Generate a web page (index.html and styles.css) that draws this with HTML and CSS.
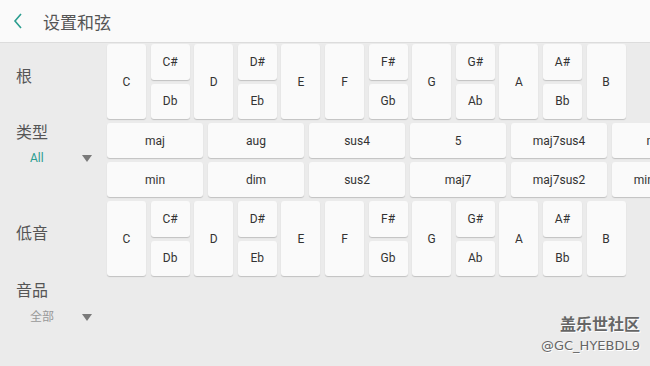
FILE: index.html
```html
<!DOCTYPE html>
<html lang="zh-CN">
<head>
    <meta charset="UTF-8">
    <meta name="viewport" content="width=device-width, initial-scale=1.0">
    <title>设置和弦</title>
    <link rel="stylesheet" href="styles.css">
</head>
<body>
    <div class="header">
        <svg class="back" width="10" height="16" viewBox="0 0 10 16">
            <polyline points="8,1 2,8 8,15" fill="none" stroke="#2a9d8f" stroke-width="1.6"/>
        </svg>
        <span class="title">设置和弦</span>
    </div>

    <div class="main">
        <div class="label root-label"><span class="name">根</span></div>
        <div class="keys" id="rootKeys"></div>

        <div class="label type-label">
            <span class="name">类型</span>
            <div class="select"><span class="value green">All</span><span class="arrow"></span></div>
        </div>
        <div class="types">
            <div class="type-row">
                <div class="btn">maj</div><div class="btn">aug</div><div class="btn">sus4</div>
                <div class="btn">5</div><div class="btn">maj7sus4</div><div class="btn">min7</div>
            </div>
            <div class="type-row">
                <div class="btn">min</div><div class="btn">dim</div><div class="btn">sus2</div>
                <div class="btn">maj7</div><div class="btn">maj7sus2</div><div class="btn">min7sus4</div>
            </div>
        </div>

        <div class="label bass-label"><span class="name">低音</span></div>
        <div class="keys" id="bassKeys"></div>

        <div class="label fret-label">
            <span class="name">音品</span>
            <div class="select"><span class="value">全部</span><span class="arrow"></span></div>
        </div>
    </div>

    <div class="watermark">
        <div class="wm-big">盖乐世社区</div>
        <div class="wm-small">@GC_HYEBDL9</div>
    </div>

    <script>
        // 十二个音
        const notes = ['C', ['C#', 'Db'], 'D', ['D#', 'Eb'], 'E', 'F', ['F#', 'Gb'], 'G', ['G#', 'Ab'], 'A', ['A#', 'Bb'], 'B'];

        function buildKeys(id) {
            const box = document.getElementById(id);
            notes.forEach(n => {
                if (Array.isArray(n)) {
                    const col = document.createElement('div');
                    col.className = 'key-col';
                    n.forEach(t => {
                        const k = document.createElement('div');
                        k.className = 'key half';
                        k.textContent = t;
                        col.appendChild(k);
                    });
                    box.appendChild(col);
                } else {
                    const k = document.createElement('div');
                    k.className = 'key';
                    k.textContent = n;
                    box.appendChild(k);
                }
            });
        }

        buildKeys('rootKeys');
        buildKeys('bassKeys');
    </script>
</body>
</html>
```
FILE: styles.css
```css
body {
    margin: 0;
    padding: 0;
    width: 650px;
    height: 366px;
    overflow: hidden;
    background-color: #ebebeb;
    font-family: Roboto, "Noto Sans CJK SC", sans-serif;
    position: relative;
}

.header {
    height: 42px;
    background-color: #fafafa;
    border-bottom: 1px solid #dcdcdc;
    display: flex;
    align-items: center;
    padding-left: 13px;
}

.back {
    margin-right: 20px;
}

.title {
    font-size: 17px;
    color: #555;
}

.main {
    display: grid;
    grid-template-columns: 107px 1fr;
    row-gap: 4px;
    padding-top: 1px;
}

.label {
    padding-left: 16px;
    color: #555;
}

.name {
    font-size: 16px;
    line-height: 18px;
    display: block;
}

.root-label {
    padding-top: 24px;
}

.type-label {
    padding-top: 1px;
}

.bass-label {
    padding-top: 24px;
}

.fret-label {
    padding-top: 2px;
}

.select {
    display: flex;
    align-items: center;
    justify-content: space-between;
    width: 62px;
    padding-left: 14px;
    margin-top: 9px;
}

.fret-label .select {
    margin-top: 10px;
}

.value {
    font-size: 12px;
    line-height: 14px;
    color: #999;
}

.value.green {
    color: #2a9d8f;
}

.arrow {
    width: 0;
    height: 0;
    border-left: 5px solid transparent;
    border-right: 5px solid transparent;
    border-top: 7px solid #7a7a7a;
}

.keys {
    display: grid;
    grid-template-columns: repeat(12, 39px);
    column-gap: 4.6px;
    height: 75px;
}

.key-col {
    display: flex;
    flex-direction: column;
    gap: 4px;
}

.key {
    background-color: #fafafa;
    border-radius: 3px;
    box-shadow: 0 1px 1px rgba(0, 0, 0, 0.18);
    display: flex;
    align-items: center;
    justify-content: center;
    font-size: 12px;
    color: #333;
}

.key.half {
    flex: 1;
}

.types {
    display: flex;
    flex-direction: column;
    gap: 4px;
}

.type-row {
    display: flex;
    gap: 5px;
}

.btn {
    flex: none;
    width: 96px;
    height: 35px;
    background-color: #fafafa;
    border-radius: 3px;
    box-shadow: 0 1px 1px rgba(0, 0, 0, 0.18);
    display: flex;
    align-items: center;
    justify-content: center;
    font-size: 12px;
    color: #333;
}

.watermark {
    position: absolute;
    right: 10px;
    bottom: 10px;
    text-align: right;
    color: #666;
    text-shadow: 1px 1px 0 #fff;
}

.wm-big {
    font-size: 16px;
    font-weight: bold;
    line-height: 22px;
}

.wm-small {
    font-family: "DejaVu Sans", sans-serif;
    font-size: 13px;
    line-height: 20px;
}
```
